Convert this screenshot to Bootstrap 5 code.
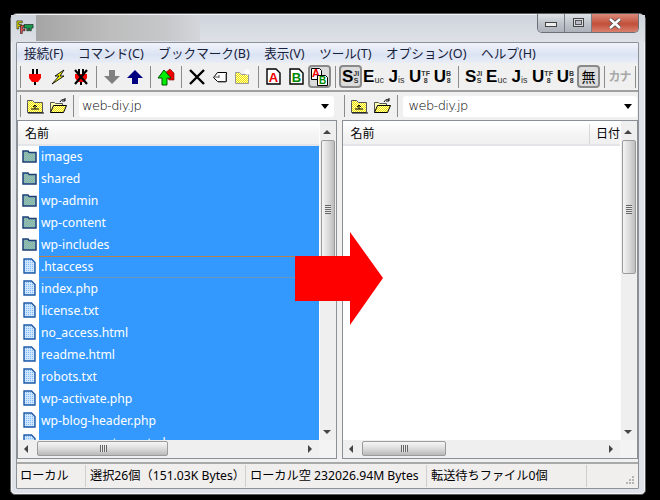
<!DOCTYPE html>
<html lang="ja">
<head>
<meta charset="UTF-8">
<title>FFFTP</title>
<link href="https://cdn.jsdelivr.net/npm/bootstrap@5.3.0/dist/css/bootstrap.min.css" rel="stylesheet">
<style>
html, body { height: 100%; }
body { background: #000; font-family: "Noto Sans", "Noto Sans CJK JP", sans-serif; font-size: 12.2px; color: #000; overflow: hidden; line-height: 1.2; }
.ff-win { position: relative; width: 636px; height: 482px; margin: 13px 0 0 10px; padding: 0 6px 6px 5px; background: #dfe3e9; border: 1px solid #5c5c5c; border-radius: 7px 7px 5px 5px; box-shadow: inset 0 0 0 1px #f2f4f7; }
.ff-title { height: 27px; background: linear-gradient(#cfd4dc, #dde1e7); margin: 1px -6px 0 -5px; padding-left: 5px; }
.ff-logo { width: 18px; height: 18px; margin-top: 5px; }
.ff-blur { width: 164px; height: 26px; margin-left: 2px; background: linear-gradient(90deg, #a5a5a5, #bdbdbd 45%, #c6c8ca 80%, #d3d6db); }
.ff-caps { width: 102px; height: 19px; margin: -1px 6px 0 0; border: 1px solid #6c6f75; border-top: 0; border-radius: 0 0 5px 5px; overflow: hidden; }
.ff-cap { width: 28px; background: linear-gradient(#dfe3e8, #c0c5cc 50%, #aeb3bb); border-right: 1px solid #7b7e84; }
.ff-cap + .ff-cap { width: 27px; }
.ff-cap + .ff-cap + .ff-close { width: 47px; background: linear-gradient(#dc8a7b, #c2503a 55%, #d9806e); border: 0; }
.ff-client { height: 447px; background: #f0f0f0; border: 1px solid #8d9299; border-radius: 1px; }
.ff-menu { height: 20px; padding: 1px 0 0 7px; gap: 14.6px; font-size: 12.6px; background: linear-gradient(#f0f3fa, #dbe3f3 60%, #e9edf6); color: #16213c; white-space: nowrap; }
.ff-tools { height: 29px; border-bottom: 2px solid #a0a0a0; }
.ff-sep { width: 8px; height: 22px; flex: none; background: linear-gradient(#8b8b8b, #8b8b8b) center / 1px 100% no-repeat; }
.ff-sep:first-child { width: 6px; }
.ff-btn { width: 23px; height: 23px; flex: none; font-family: "Liberation Sans", sans-serif; position: relative; }
.ff-on { background: #dcdcdc; border: 2px solid #8a8a8a; border-radius: 4px; }
.ff-big { font-weight: 700; font-size: 17px; line-height: 1; }
.ff-sup { font-size: 7px; line-height: 7px; text-align: center; font-weight: 700; color: #333; }
.ff-low { font-size: 9px; line-height: 1; align-self: flex-end; margin-bottom: 3px; color: #333; }
.ff-kanji { font-family: "Noto Sans CJK JP", sans-serif; font-size: 14px; }
.ff-kana { font-family: "Noto Sans CJK JP", sans-serif; font-size: 12px; font-weight: 700; color: #a8a8a8; letter-spacing: -1px; }
.ff-addr { height: 28px; }
.ff-half-l { width: 325px; }
.ff-half-r { width: 297px; }
.ff-combo { height: 21px; background: #fff; border-radius: 3px; padding: 0 5px 0 3px; margin: 0 7px 0 2px; font-family: "DejaVu Sans", "Noto Sans CJK JP", sans-serif; font-size: 13px; font-weight: 200; color: #000; }
.ff-half-r .ff-combo { margin-right: 1px; padding-left: 5px; }
.ff-host { letter-spacing: -.6px; }
.ff-drop { width: 0; height: 0; border: 4px solid transparent; border-top: 5px solid #000; border-bottom: 0; }
.ff-panes { height: 339px; gap: 5px; }
.ff-pane { background: #fff; border: 1px solid #8b8f96; min-width: 0; }
.ff-pane-l { width: 321px; }
.ff-pane-r { width: 296px; }
.ff-head { height: 25px; padding: 3px 0 0 7px; font-size: 12px; background: linear-gradient(#fff 5%, #f4f4f4 60%, #f0f0f0); border-bottom: 2px solid #e3e5e8; flex: none; }
.ff-date { border-left: 1px solid #d8d8d8; padding-left: 6px; height: 100%; }
.ff-rows { height: 294px; overflow: hidden; }
.ff-row { height: 22px; flex: none; }
.ff-row svg { margin: -2px 2px 0 4px; flex: none; }
.ff-name { background: #3399ff; color: #fff; height: 100%; flex: 1; padding-left: 2px; line-height: 22px; }
.ff-focus { box-shadow: inset 0 1px 0 #b87f4e, inset 0 -1px 0 #6f94b8; }
.ff-vbar { width: 17px; background: #efefef; border-left: 1px solid #fdfdfd; position: relative; flex: none; }
.ff-hbar { height: 18px; background: #efefef; flex: none; }
.ff-hscroll { position: relative; flex: 1; }
.ff-corner { width: 17px; background: #f3f3f3; flex: none; }
.ff-vthumb { position: absolute; left: 1px; right: 1px; top: 19px; height: 134px; background: linear-gradient(90deg, #f4f4f4, #dcdcdc 50%, #bdbdbd); border: 1px solid #9b9b9b; border-radius: 2px; }
.ff-hthumb { position: absolute; top: 1px; height: 15px; background: linear-gradient(#f6f6f6, #dcdcdc 50%, #b9b9b9); border: 1px solid #9b9b9b; border-radius: 2px; }
.ff-hthumb-l { left: 19px; width: 131px; }
.ff-hthumb-r { left: 19px; width: 84px; }
.ff-grip-v { position: absolute; left: 3px; right: 3px; top: 64px; height: 9px; background: repeating-linear-gradient(#666 0 1px, #e8e8e8 1px 2px); }
.ff-grip-h { position: absolute; top: 3px; bottom: 3px; left: 50%; width: 7px; margin-left: -3px; background: repeating-linear-gradient(90deg, #666 0 1px, #e8e8e8 1px 2px); }
.ff-up, .ff-down, .ff-left, .ff-right { position: absolute; width: 0; height: 0; border: 4px solid transparent; }
.ff-up { left: 3px; top: 9px; border-bottom: 4px solid #444; border-top: 0; }
.ff-down { left: 3px; bottom: 6px; border-top: 4px solid #444; border-bottom: 0; }
.ff-left { left: 6px; top: 5px; border-right: 4px solid #444; border-left: 0; }
.ff-right { right: 7px; top: 5px; border-left: 4px solid #444; border-right: 0; }
.ff-status { height: 26px; margin-top: 3px; border-top: 2px solid #a9a9a9; background: #f1eeee; white-space: nowrap; }
.ff-cell { height: 22px; padding-left: 4px; border-right: 1px solid #cfcfcf; flex: none; margin-top: 1px; }
.ff-cell-1 { width: 69px; padding-left: 3px; }
.ff-cell-2 { width: 160px; }
.ff-cell-3 { width: 181px; }
.ff-cell-4 { width: 160px; }
.ff-arrow { position: absolute; left: 284px; top: 218px; }
</style>
</head>
<body>
<svg width="0" height="0" class="position-absolute">
  <defs>
    <pattern id="dBlue" width="2" height="2" patternUnits="userSpaceOnUse"><rect width="2" height="2" fill="#6fa8cc"/><rect width="1" height="1" fill="#a8cc90"/><rect x="1" y="1" width="1" height="1" fill="#a8cc90"/></pattern>
    <pattern id="dFile" width="2" height="2" patternUnits="userSpaceOnUse"><rect width="2" height="2" fill="#cfe6ff"/><rect width="1" height="1" fill="#7fb8ff"/></pattern>
    <pattern id="dYel" width="2" height="2" patternUnits="userSpaceOnUse"><rect width="2" height="2" fill="#ffffb0"/><rect width="1" height="1" fill="#f0e000"/><rect x="1" y="1" width="1" height="1" fill="#f0e000"/></pattern>
    <symbol id="iFolder" viewBox="0 0 15 14"><path d="M1 3.500V2h5l1 1.500h7V13H1z" fill="url(#dBlue)" stroke="#1d3f78" stroke-width="1.500"/></symbol>
    <symbol id="iFile" viewBox="0 0 15 16"><path d="M2 1h7.500L13 4.500V15H2z" fill="url(#dFile)" stroke="#1d5aa8" stroke-width="1.400"/></symbol>
    <symbol id="iPlug" viewBox="0 0 16 16"><path d="M5 0h2v5H5zM9 0h2v5H9zM7 12h2v4H7z" fill="#000"/><path d="M2 5h12v4l-3 4H5L2 9z" fill="#f00"/></symbol>
    <symbol id="iUp" viewBox="0 0 16 16"><path d="M8 1l8 8h-5v6H5V9H0z"/></symbol>
    <symbol id="iFoldUp" viewBox="0 0 18 16"><path d="M1.500 4.500V2.500h5l2 2h8v10h-15z" fill="url(#dYel)" stroke="#555"/><path d="M2 15h16" stroke="#000"/><path d="M5 11h8M9 11V7M7 9l2-2 2 2" stroke="#000" fill="none"/></symbol>
    <symbol id="iFoldOpen" viewBox="0 0 18 16"><path d="M1.500 14.500V4.500h4l1 1h7v2" fill="#ffffb0" stroke="#555"/><path d="M1.500 14.500l3-7h13l-3 7z" fill="url(#dYel)" stroke="#000"/><path d="M11 4c2-3 3-3 5-2M16 0v3h-3" stroke="#000" fill="none"/></symbol>
  </defs>
</svg>

<div class="ff-win d-flex flex-column">
  <div class="ff-title d-flex flex-shrink-0">
    <svg class="ff-logo flex-shrink-0" viewBox="0 0 20 20"><path d="M1 1h6v2H3v2h3v2H3v3H1z" fill="#dd0" stroke="#000" stroke-width=".6"/><path d="M5 6h6v2H7v2h3v2H7v3H5z" fill="#e55" stroke="#000" stroke-width=".6"/><path d="M9 5h10v4h-2v3h-2V9h-1v3h-2V9H9z" fill="#1a9a4a" stroke="#000" stroke-width=".6"/></svg>
    <div class="ff-blur"></div>
    <div class="ff-caps d-flex ms-auto">
      <div class="ff-cap d-flex align-items-center justify-content-center"><svg width="12" height="8" viewBox="0 0 12 8"><rect x=".5" y="3.5" width="11" height="4" fill="#eee" stroke="#444"/></svg></div>
      <div class="ff-cap d-flex align-items-center justify-content-center"><svg width="11" height="10" viewBox="0 0 11 10"><rect x=".5" y=".5" width="10" height="8" fill="#d8dde3" stroke="#444"/><rect x="2.5" y="2.5" width="6" height="4" fill="#b9bec6" stroke="#555"/></svg></div>
      <div class="ff-cap ff-close d-flex align-items-center justify-content-center"><svg width="14" height="11" viewBox="0 0 14 11"><path d="M2 1l10 9M12 1L2 10" stroke="#4a4a4a" stroke-width="4"/><path d="M2 1l10 9M12 1L2 10" stroke="#fff" stroke-width="2.5"/></svg></div>
    </div>
  </div>

  <div class="ff-client d-flex flex-column">
    <nav class="ff-menu d-flex align-items-center flex-shrink-0">
      <span>接続(F)</span><span>コマンド(C)</span><span>ブックマーク(B)</span><span>表示(V)</span><span>ツール(T)</span><span>オプション(O)</span><span>ヘルプ(H)</span>
    </nav>

    <div class="ff-tools d-flex align-items-center flex-shrink-0">
      <div class="ff-sep"></div>
      <div class="ff-btn d-flex align-items-center justify-content-center"><svg width="16" height="16"><use href="#iPlug"/></svg></div>
      <div class="ff-btn d-flex align-items-center justify-content-center"><svg width="16" height="16" viewBox="0 0 16 16"><path d="M14 1L5 7h4L2 15l12-8h-4l4-6z" fill="#ff0" stroke="#000" stroke-width=".9"/></svg></div>
      <div class="ff-btn d-flex align-items-center justify-content-center"><svg width="16" height="16" viewBox="0 0 16 16"><use href="#iPlug" width="16" height="16"/><path d="M2 1l12 14M14 1L2 15" stroke="#000" stroke-width="2.200"/></svg></div>
      <div class="ff-sep"></div>
      <div class="ff-btn d-flex align-items-center justify-content-center"><svg width="16" height="16" viewBox="0 0 16 16" fill="#808080"><path d="M8 15l8-8h-5V1H5v6H0z"/></svg></div>
      <div class="ff-btn d-flex align-items-center justify-content-center"><svg width="16" height="16" fill="#000080"><use href="#iUp"/></svg></div>
      <div class="ff-sep"></div>
      <div class="ff-btn d-flex align-items-center justify-content-center"><svg width="18" height="18" viewBox="0 0 18 18"><path d="M8 5l5-4 4 4v7h-5z" fill="#e00" stroke="#700" stroke-width=".6"/><path d="M7 2l7 8h-4v7H5v-7H1z" fill="#0e0" stroke="#050"/></svg></div>
      <div class="ff-sep"></div>
      <div class="ff-btn d-flex align-items-center justify-content-center"><svg width="16" height="16" viewBox="0 0 16 16"><path d="M1 1l14 14M15 1L1 15" stroke="#000" stroke-width="2.400"/></svg></div>
      <div class="ff-btn d-flex align-items-center justify-content-center"><svg width="16" height="12" viewBox="0 0 16 12"><path d="M5.500 1.500h9v9h-9l-4-4z" fill="#fff" stroke="#000"/><path d="M14 3v8H6" stroke="#555" fill="none"/><path d="M2 6h5M7 4v3" stroke="#555"/></svg></div>
      <div class="ff-btn d-flex align-items-center justify-content-center"><svg width="17" height="16" viewBox="0 0 17 16"><path d="M1.500 5.500V3.500h4l2 2h7v9h-13z" fill="url(#dYel)" stroke="#999"/><path d="M13 0v6M10 3h6M11 1l4 4M15 1l-4 4" stroke="#fff" stroke-width="1.200"/></svg></div>
      <div class="ff-sep"></div>
      <div class="ff-btn d-flex align-items-center justify-content-center"><svg width="15" height="17" viewBox="0 0 15 17"><path d="M1 1h9l4 4v11H1z" fill="#fff" stroke="#000" stroke-width="1.400"/><text x="7.500" y="13.500" text-anchor="middle" font-family="Liberation Sans" font-weight="700" font-size="13" fill="#e00">A</text></svg></div>
      <div class="ff-btn d-flex align-items-center justify-content-center"><svg width="15" height="17" viewBox="0 0 15 17"><path d="M1 1h9l4 4v11H1z" fill="#fff" stroke="#000" stroke-width="1.400"/><text x="7.500" y="13.500" text-anchor="middle" font-family="Liberation Sans" font-weight="700" font-size="13" fill="#080">B</text></svg></div>
      <div class="ff-btn ff-on d-flex align-items-center justify-content-center"><svg width="17" height="18" viewBox="0 0 17 18"><path d="M.5.5h8l2 2v9H.5z" fill="#fff" stroke="#000"/><text x="5" y="9" text-anchor="middle" font-family="Liberation Sans" font-weight="700" font-size="11" fill="#e00">A</text><path d="M6.500 7.500h8l2 2v8h-10z" fill="#fff" stroke="#000"/><text x="11.500" y="16" text-anchor="middle" font-family="Liberation Sans" font-weight="700" font-size="10" fill="#080">B</text></svg></div>
      <div class="ff-sep"></div>
      <div class="ff-btn ff-on d-flex align-items-center justify-content-center"><span class="ff-big">S</span><span class="ff-sup">JI<br>S</span></div>
      <div class="ff-btn d-flex align-items-center justify-content-center"><span class="ff-big">E</span><span class="ff-low">uc</span></div>
      <div class="ff-btn d-flex align-items-center justify-content-center"><span class="ff-big">J</span><span class="ff-low">is</span></div>
      <div class="ff-btn d-flex align-items-center justify-content-center"><span class="ff-big">U</span><span class="ff-sup">TF<br>8</span></div>
      <div class="ff-btn d-flex align-items-center justify-content-center"><span class="ff-big">U</span><span class="ff-sup">B<br>8</span></div>
      <div class="ff-sep"></div>
      <div class="ff-btn d-flex align-items-center justify-content-center"><span class="ff-big">S</span><span class="ff-sup">JI<br>S</span></div>
      <div class="ff-btn d-flex align-items-center justify-content-center"><span class="ff-big">E</span><span class="ff-low">uc</span></div>
      <div class="ff-btn d-flex align-items-center justify-content-center"><span class="ff-big">J</span><span class="ff-low">is</span></div>
      <div class="ff-btn d-flex align-items-center justify-content-center"><span class="ff-big">U</span><span class="ff-sup">TF<br>8</span></div>
      <div class="ff-btn d-flex align-items-center justify-content-center"><span class="ff-big">U</span><span class="ff-sup">B<br>8</span></div>
      <div class="ff-btn ff-on ff-kanji d-flex align-items-center justify-content-center">無</div>
      <div class="ff-sep"></div>
      <div class="ff-btn ff-kana d-flex align-items-center justify-content-center">カナ</div>
      <div class="ff-sep"></div>
    </div>

    <div class="ff-addr d-flex flex-shrink-0">
      <div class="ff-half-l d-flex align-items-center">
        <div class="ff-sep"></div>
        <div class="ff-btn d-flex align-items-center justify-content-center"><svg width="18" height="16"><use href="#iFoldUp"/></svg></div>
        <div class="ff-btn d-flex align-items-center justify-content-center"><svg width="18" height="16"><use href="#iFoldOpen"/></svg></div>
        <div class="ff-sep"></div>
        <div class="ff-combo d-flex align-items-center justify-content-between flex-grow-1"><span class="ff-host">web-diy.jp</span><i class="ff-drop"></i></div>
      </div>
      <div class="ff-half-r d-flex align-items-center">
        <div class="ff-sep"></div>
        <div class="ff-btn d-flex align-items-center justify-content-center"><svg width="18" height="16"><use href="#iFoldUp"/></svg></div>
        <div class="ff-btn d-flex align-items-center justify-content-center"><svg width="18" height="16"><use href="#iFoldOpen"/></svg></div>
        <div class="ff-sep"></div>
        <div class="ff-combo d-flex align-items-center justify-content-between flex-grow-1"><span class="ff-host">web-diy.jp</span><i class="ff-drop"></i></div>
      </div>
    </div>

    <div class="ff-panes d-flex flex-shrink-0">
      <section class="ff-pane ff-pane-l d-flex flex-column">
        <div class="d-flex flex-grow-1">
          <div class="flex-grow-1 d-flex flex-column">
            <div class="ff-head d-flex align-items-center">名前</div>
            <div class="ff-rows d-flex flex-column">
              <div class="ff-row d-flex align-items-center"><svg width="15" height="14"><use href="#iFolder"/></svg><div class="ff-name">images</div></div>
              <div class="ff-row d-flex align-items-center"><svg width="15" height="14"><use href="#iFolder"/></svg><div class="ff-name">shared</div></div>
              <div class="ff-row d-flex align-items-center"><svg width="15" height="14"><use href="#iFolder"/></svg><div class="ff-name">wp-admin</div></div>
              <div class="ff-row d-flex align-items-center"><svg width="15" height="14"><use href="#iFolder"/></svg><div class="ff-name">wp-content</div></div>
              <div class="ff-row d-flex align-items-center"><svg width="15" height="14"><use href="#iFolder"/></svg><div class="ff-name">wp-includes</div></div>
              <div class="ff-row d-flex align-items-center"><svg width="15" height="16"><use href="#iFile"/></svg><div class="ff-name ff-focus">.htaccess</div></div>
              <div class="ff-row d-flex align-items-center"><svg width="15" height="16"><use href="#iFile"/></svg><div class="ff-name">index.php</div></div>
              <div class="ff-row d-flex align-items-center"><svg width="15" height="16"><use href="#iFile"/></svg><div class="ff-name">license.txt</div></div>
              <div class="ff-row d-flex align-items-center"><svg width="15" height="16"><use href="#iFile"/></svg><div class="ff-name">no_access.html</div></div>
              <div class="ff-row d-flex align-items-center"><svg width="15" height="16"><use href="#iFile"/></svg><div class="ff-name">readme.html</div></div>
              <div class="ff-row d-flex align-items-center"><svg width="15" height="16"><use href="#iFile"/></svg><div class="ff-name">robots.txt</div></div>
              <div class="ff-row d-flex align-items-center"><svg width="15" height="16"><use href="#iFile"/></svg><div class="ff-name">wp-activate.php</div></div>
              <div class="ff-row d-flex align-items-center"><svg width="15" height="16"><use href="#iFile"/></svg><div class="ff-name">wp-blog-header.php</div></div>
              <div class="ff-row d-flex align-items-center"><svg width="15" height="16"><use href="#iFile"/></svg><div class="ff-name">wp-comments-post.php</div></div>
            </div>
          </div>
          <div class="ff-vbar"><i class="ff-up"></i><div class="ff-vthumb"><div class="ff-grip-v"></div></div><i class="ff-down"></i></div>
        </div>
        <div class="ff-hbar d-flex">
          <div class="ff-hscroll"><i class="ff-left"></i><div class="ff-hthumb ff-hthumb-l"><div class="ff-grip-h"></div></div><i class="ff-right"></i></div>
          <div class="ff-corner"></div>
        </div>
      </section>
      <section class="ff-pane ff-pane-r d-flex flex-column">
        <div class="d-flex flex-grow-1">
          <div class="flex-grow-1 d-flex flex-column">
            <div class="ff-head d-flex align-items-center justify-content-between"><span>名前</span><span class="ff-date d-flex align-items-center">日付</span></div>
            <div class="flex-grow-1"></div>
          </div>
          <div class="ff-vbar"><i class="ff-up"></i><div class="ff-vthumb"><div class="ff-grip-v"></div></div><i class="ff-down"></i></div>
        </div>
        <div class="ff-hbar d-flex">
          <div class="ff-hscroll"><i class="ff-left"></i><div class="ff-hthumb ff-hthumb-r"><div class="ff-grip-h"></div></div><i class="ff-right"></i></div>
          <div class="ff-corner"></div>
        </div>
      </section>
    </div>

    <footer class="ff-status d-flex flex-shrink-0">
      <div class="ff-cell ff-cell-1 d-flex align-items-center">ローカル</div>
      <div class="ff-cell ff-cell-2 d-flex align-items-center">選択26個（151.03K Bytes）</div>
      <div class="ff-cell ff-cell-3 d-flex align-items-center">ローカル空 232026.94M Bytes</div>
      <div class="ff-cell ff-cell-4 d-flex align-items-center">転送待ちファイル0個</div>
      <svg class="ms-auto mt-auto mb-1 me-1" width="8" height="8" viewBox="0 0 8 8" fill="#b5b5b5"><path d="M6 0h2v2H6zM3 3h2v2H3zM6 3h2v2H6zM0 6h2v2H0zM3 6h2v2H3zM6 6h2v2H6z"/></svg>
    </footer>
  </div>

  <svg class="ff-arrow" width="90" height="94" viewBox="0 0 90 94"><path d="M0 24h55V0l33 46-33 47V69H0z" fill="#f00"/></svg>
</div>
<script src="https://cdn.jsdelivr.net/npm/bootstrap@5.3.0/dist/js/bootstrap.bundle.min.js"></script>
</body>
</html>
